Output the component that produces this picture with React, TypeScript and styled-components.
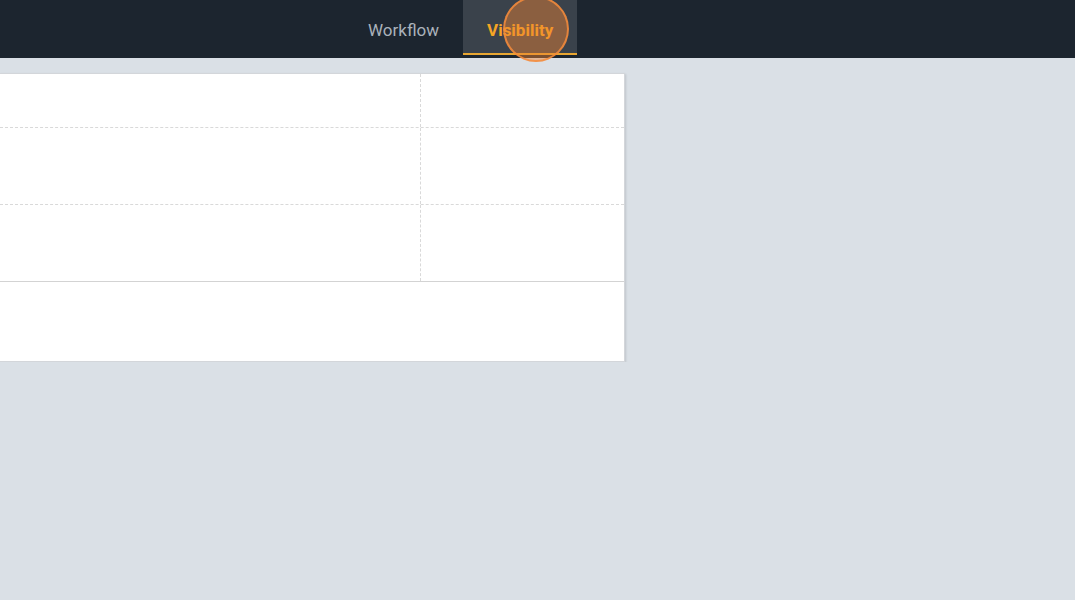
import React from "react";
import styled, { createGlobalStyle } from "styled-components";

const Global = createGlobalStyle`
  html, body { margin: 0; padding: 0; background: #dae0e6; }
  body { font-family: Roboto, "Noto Sans", sans-serif; }
`;

const Header = styled.header`
  height: 58px;
  background: #1c252f;
  display: flex;
  align-items: flex-start;
  padding-left: 344px;
  box-sizing: border-box;
`;

const Tab = styled.div<{ $active?: boolean }>`
  position: relative;
  height: 55px;
  padding: 7px 24px 0;
  display: flex;
  align-items: center;
  box-sizing: border-box;
  font-size: 17px;
  font-weight: ${(p) => (p.$active ? 700 : 400)};
  color: ${(p) => (p.$active ? "#f5a524" : "#aab2bb")};
  background: ${(p) => (p.$active ? "#3a424b" : "transparent")};
  border-bottom: 2px solid ${(p) => (p.$active ? "#e8a631" : "transparent")};
`;

const ClickMark = styled.span`
  position: absolute;
  left: 40px;
  top: -4px;
  width: 62px;
  height: 62px;
  border-radius: 50%;
  background: rgba(240, 130, 50, 0.45);
  border: 2px solid rgba(245, 140, 60, 0.85);
  pointer-events: none;
`;

const Main = styled.main`
  padding-top: 15px;
`;

const Card = styled.div`
  margin-left: -1px;
  width: 626px;
  background: #fff;
  border: 1px solid #d3d6da;
  box-shadow: 1px 1px 2px rgba(0, 0, 0, 0.12);
  box-sizing: border-box;
`;

const Row = styled.div<{ $h: number; $last?: boolean }>`
  display: grid;
  grid-template-columns: 420px 1fr;
  height: ${(p) => p.$h}px;
  box-sizing: border-box;
  border-bottom: 1px ${(p) => (p.$last ? "solid #d3d3d3" : "dashed #d9d9d9")};
`;

const Cell = styled.div`
  & + & {
    border-left: 1px dashed #d9d9d9;
  }
`;

const Footer = styled.div`
  height: 79px;
`;

export default function App() {
  return (
    <>
      <Global />
      <Header>
        <Tab>Workflow</Tab>
        <Tab $active>
          Visibility
          <ClickMark />
        </Tab>
      </Header>
      <Main>
        <Card>
          <Row $h={54}>
            <Cell />
            <Cell />
          </Row>
          <Row $h={77}>
            <Cell />
            <Cell />
          </Row>
          <Row $h={77} $last>
            <Cell />
            <Cell />
          </Row>
          <Footer />
        </Card>
      </Main>
    </>
  );
}
